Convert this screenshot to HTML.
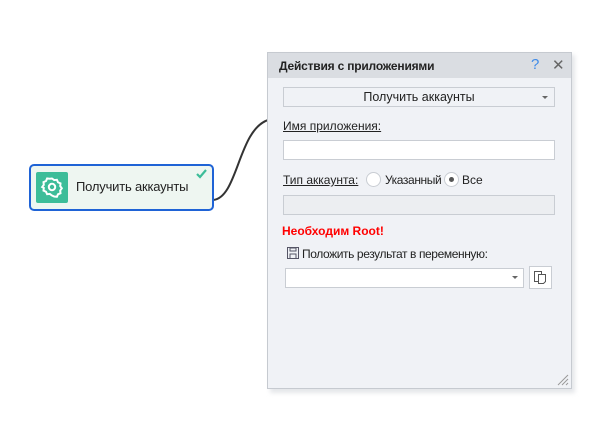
<!DOCTYPE html><html><head><style>
body{margin:0;width:608px;height:445px;background:#fff;position:relative;font-family:"Liberation Sans",sans-serif;font-size:12px;color:#222;overflow:hidden}
.a{position:absolute}
.inp{position:absolute;background:#fff;border:1px solid #c9cdd3;box-sizing:border-box}
u{text-decoration:underline}
</style></head><body>
<svg class="a" style="left:0;top:0" width="608" height="445"><path d="M213 200 C238 198 238 130 268 120" stroke="#333" stroke-width="2" fill="none"/></svg>
<div class="a" style="left:29px;top:164px;width:185px;height:47px;box-sizing:border-box;border:2px solid #1f63d6;border-radius:5px;background:#eef6f1"></div>
<div class="a" style="left:36px;top:172px;width:32px;height:31px;background:#3dbd99;border-radius:2px"></div>
<svg class="a" style="left:40px;top:175px" width="24" height="24" viewBox="0 0 24 24"><path d="M12 3.5l2.2 1.6 2.7-.3 1.1 2.5 2.5 1.1-.3 2.7 1.6 2.2-1.6 2.2.3 2.7-2.5 1.1-1.1 2.5-2.7-.3L12 20.5l-2.2-1.6-2.7.3-1.1-2.5-2.5-1.1.3-2.7L2.2 12l1.6-2.2-.3-2.7 2.5-1.1 1.1-2.5 2.7.3z" fill="none" stroke="#fff" stroke-width="2"/><circle cx="12" cy="12" r="3.2" fill="none" stroke="#fff" stroke-width="2"/></svg>
<div class="a" style="left:76px;top:179px;font-size:13px;letter-spacing:-0.2px;color:#222">Получить аккаунты</div>
<svg class="a" style="left:196px;top:169px" width="12" height="10"><path d="M1 5l3 3 6-7" stroke="#3dbd99" stroke-width="2.2" fill="none"/></svg>

<div class="a" style="left:270px;top:55px;width:305px;height:338px;background:#e5e7ea;filter:blur(2px)"></div>
<div class="a" style="left:267px;top:52px;width:305px;height:337px;box-sizing:border-box;border:1px solid #c6cad0;background:#f0f2f6"></div>
<div class="a" style="left:268px;top:53px;width:303px;height:25px;background:#dadde2"></div>
<div class="a" style="left:279px;top:59px;font-weight:bold;font-size:12px;letter-spacing:-0.2px;color:#222">Действия с приложениями</div>
<div class="a" style="left:531px;top:56px;font-size:15px;color:#3f8be8">?</div>
<div class="a" style="left:552px;top:56px;font-size:15px;color:#666">✕</div>

<div class="inp" style="left:283px;top:87px;width:272px;height:20px;background:#f0f2f6"></div>
<div class="a" style="left:283px;top:90px;width:272px;text-align:center;font-size:12.5px">Получить аккаунты</div>
<div class="a" style="left:542px;top:96px;border:3px solid transparent;border-top:3px solid #666"></div>
<div class="a" style="left:283px;top:119px"><u>Имя приложения:</u></div>
<div class="inp" style="left:283px;top:140px;width:272px;height:20px"></div>
<div class="a" style="left:283px;top:173px"><u>Тип аккаунта:</u></div>
<div class="a" style="left:366px;top:172px;width:15px;height:15px;border:1px solid #c9cdd3;border-radius:50%;background:#fff;box-sizing:border-box"></div>
<div class="a" style="left:385px;top:173px;letter-spacing:-0.4px">Указанный</div>
<div class="a" style="left:444px;top:172px;width:15px;height:15px;border:1px solid #c9cdd3;border-radius:50%;background:#fff;box-sizing:border-box"></div>
<div class="a" style="left:449px;top:177px;width:5px;height:5px;border-radius:50%;background:#555"></div>
<div class="a" style="left:462px;top:173px">Все</div>
<div class="inp" style="left:283px;top:195px;width:272px;height:20px;background:#eceef1"></div>
<div class="a" style="left:282px;top:224px;color:#f00;font-weight:bold">Необходим Root!</div>
<svg class="a" style="left:287px;top:247px" width="12" height="12"><rect x=".5" y=".5" width="11" height="11" fill="none" stroke="#556" /><rect x="3" y="1" width="6" height="3" fill="none" stroke="#556"/><rect x="3" y="7" width="6" height="4.5" fill="none" stroke="#556"/></svg>
<div class="a" style="left:302px;top:247px;letter-spacing:-0.4px">Положить результат в переменную:</div>
<div class="inp" style="left:285px;top:268px;width:239px;height:20px"></div>
<div class="a" style="left:512px;top:276px;border:3px solid transparent;border-top:3px solid #666"></div>
<div class="inp" style="left:529px;top:266px;width:23px;height:23px"></div>
<svg class="a" style="left:533px;top:270px" width="15" height="15"><path d="M1.5 1.5h7v10h-7z" fill="#fff" stroke="#555"/><path d="M5.5 4.5h7v7l-2 2h-5z" fill="#fff" stroke="#555"/></svg>
<svg class="a" style="left:555px;top:372px" width="14" height="14"><path d="M13 3L3 13M13 7L7 13M13 11L11 13" stroke="#999" stroke-width="1"/></svg>
</body></html>
